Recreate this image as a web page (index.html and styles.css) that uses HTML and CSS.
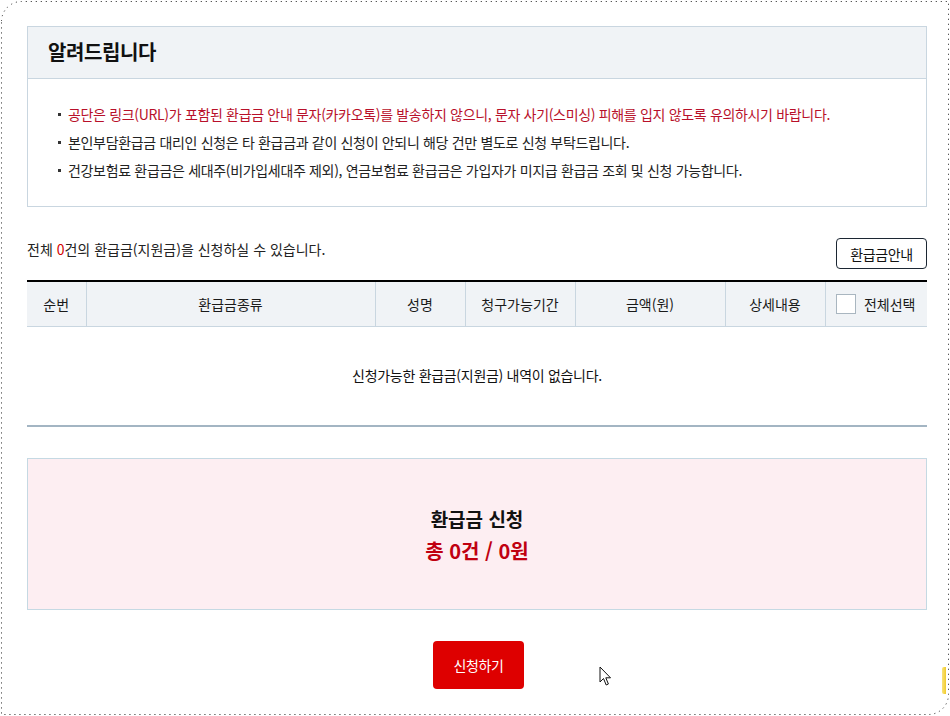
FILE: index.html
```html
<!DOCTYPE html>
<html lang="ko">
<head>
    <meta charset="UTF-8">
    <meta name="viewport" content="width=device-width, initial-scale=1.0">
    <title>환급금 신청</title>
    <link rel="stylesheet" href="styles.css">
</head>
<body>
    <div class="page">
        <div class="notice-box">
            <h2 class="notice-title">알려드립니다</h2>
            <ul class="notice-list">
                <li class="warn">공단은 링크(URL)가 포함된 환급금 안내 문자(카카오톡)를 발송하지 않으니, 문자 사기(스미싱) 피해를 입지 않도록 유의하시기 바랍니다.</li>
                <li>본인부담환급금 대리인 신청은 타 환급금과 같이 신청이 안되니 해당 건만 별도로 신청 부탁드립니다.</li>
                <li>건강보험료 환급금은 세대주(비가입세대주 제외), 연금보험료 환급금은 가입자가 미지급 환급금 조회 및 신청 가능합니다.</li>
            </ul>
        </div>

        <div class="list-top">
            <p class="total-text">전체 <span class="count">0</span>건의 환급금(지원금)을 신청하실 수 있습니다.</p>
            <button class="btn-outline">환급금안내</button>
        </div>

        <table class="refund-table">
            <colgroup>
                <col style="width:59px">
                <col style="width:289px">
                <col style="width:90px">
                <col style="width:110px">
                <col style="width:150px">
                <col style="width:100px">
                <col style="width:102px">
            </colgroup>
            <thead>
                <tr>
                    <th>순번</th>
                    <th>환급금종류</th>
                    <th>성명</th>
                    <th>청구가능기간</th>
                    <th>금액(원)</th>
                    <th>상세내용</th>
                    <th>
                        <label class="check-all"><span class="check-box"></span>전체선택</label>
                    </th>
                </tr>
            </thead>
            <tbody>
                <tr>
                    <td colspan="7" class="empty">신청가능한 환급금(지원금) 내역이 없습니다.</td>
                </tr>
            </tbody>
        </table>

        <div class="sum-box">
            <div class="sum-title">환급금 신청</div>
            <div class="sum-value">총 0건 / 0원</div>
        </div>

        <div class="btn-area">
            <button class="btn-red">신청하기</button>
        </div>
    </div>

    <!-- dotted capture frame -->
    <svg class="frame" width="950" height="716" viewBox="0 0 950 716">
        <path d="M1.5 21 A20 20 0 0 1 21.5 1.5 L948.5 1.5 L948.5 694 A20 20 0 0 1 928.5 714.5 L1.5 714.5 Z"
              fill="none" stroke="#222" stroke-width="1" stroke-dasharray="1 4"/>
    </svg>

    <svg class="cursor" width="14" height="22" viewBox="0 0 14 22">
        <path d="M1 1 L1 16 L4.5 12.5 L7.2 19 L9.4 18 L6.8 11.8 L11.5 11.8 Z" fill="#fff" stroke="#111" stroke-width="1" stroke-linejoin="round"/>
    </svg>
    <div class="edge-mark"></div>
</body>
</html>
```

FILE: styles.css
```css
* {
    margin: 0;
    padding: 0;
    box-sizing: border-box;
}

body {
    font-family: "Noto Sans CJK KR", "Noto Sans", sans-serif;
    background: #fff;
    color: #222;
    width: 950px;
    height: 716px;
    position: relative;
    overflow: hidden;
}

.page {
    width: 900px;
    margin-left: 27px;
    padding-top: 26px;
}

/* notice */
.notice-box {
    border: 1px solid #c9d6e0;
}

.notice-title {
    height: 52px;
    line-height: 50px;
    padding-left: 20px;
    font-size: 20px;
    font-weight: bold;
    color: #111;
    background: #f0f3f6;
    border-bottom: 1px solid #c9d6e0;
    letter-spacing: -0.4px;
}

.notice-list {
    list-style: none;
    padding: 21px 20px 22px 30px;
}

.notice-list li {
    position: relative;
    padding-left: 10px;
    font-size: 14px;
    line-height: 28px;
    color: #222;
    letter-spacing: -0.33px;
}

.notice-list li::before {
    content: '';
    position: absolute;
    left: 0;
    top: 13px;
    width: 3px;
    height: 3px;
    background: #333;
}

.notice-list li.warn {
    color: #b8102a;
}

/* list top */
.list-top {
    display: flex;
    justify-content: space-between;
    align-items: flex-start;
    margin-top: 31px;
}

.total-text {
    font-size: 14px;
    line-height: 22px;
}

.total-text .count {
    color: #d40000;
}

.btn-outline {
    width: 91px;
    height: 31px;
    border: 1px solid #1c2733;
    border-radius: 4px;
    background: #fff;
    font-family: inherit;
    font-size: 14px;
    letter-spacing: -0.4px;
    color: #111;
}

/* table */
.refund-table {
    width: 900px;
    margin-top: 11px;
    border-collapse: collapse;
    table-layout: fixed;
    border-top: 2px solid #000;
}

.refund-table th {
    height: 45px;
    background: #f0f3f6;
    font-size: 14px;
    font-weight: normal;
    color: #1a1a1a;
    border-bottom: 1px solid #c9d6e0;
    border-left: 1px solid #c9d6e0;
}

.refund-table th:first-child {
    border-left: none;
}

.check-all {
    display: flex;
    align-items: center;
    justify-content: center;
    gap: 8px;
    padding-right: 1px;
}

.check-box {
    width: 20px;
    height: 20px;
    border: 1px solid #a9b6c0;
    background: #fff;
}

.refund-table td.empty {
    height: 100px;
    text-align: center;
    font-size: 14px;
    letter-spacing: -0.3px;
    color: #111;
    border-bottom: 2px solid #a3b5c3;
    padding-bottom: 2px;
}

/* summary */
.sum-box {
    margin-top: 31px;
    height: 152px;
    border: 1px solid #c5d9e3;
    background: #fdeef2;
    display: flex;
    flex-direction: column;
    align-items: center;
    justify-content: center;
    padding-top: 2px;
}

.sum-title {
    font-size: 19px;
    font-weight: bold;
    line-height: 32px;
    color: #111;
}

.sum-value {
    font-size: 20px;
    font-weight: bold;
    line-height: 32px;
    color: #c00010;
}

.btn-area {
    display: flex;
    justify-content: center;
    margin-top: 31px;
    padding-left: 3px;
}

.btn-red {
    width: 91px;
    height: 48px;
    border: none;
    border-radius: 4px;
    background: #de0000;
    color: #fff;
    font-family: inherit;
    font-size: 14px;
    letter-spacing: -0.4px;
}

/* overlays */
.frame {
    position: absolute;
    left: 0;
    top: 0;
    pointer-events: none;
}

.cursor {
    position: absolute;
    left: 599px;
    top: 666px;
}

.edge-mark {
    position: absolute;
    left: 942px;
    top: 667px;
    width: 4px;
    height: 27px;
    background: linear-gradient(90deg, #f8e27a, #f2cc2c);
    border-radius: 2px 0 0 2px;
}
```
